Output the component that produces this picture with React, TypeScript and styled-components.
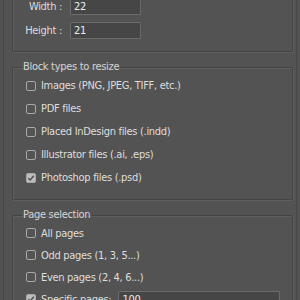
import styled, { createGlobalStyle } from "styled-components";

const Global = createGlobalStyle`
  html, body {
    margin: 0;
    padding: 0;
    background: #535353;
    overflow: hidden;
  }
  body {
    font-family: "DejaVu Sans Condensed", "Liberation Sans", sans-serif;
    font-size: 11px;
    letter-spacing: -0.3px;
    color: #dedede;
  }
`;

const Panel = styled.div`
  margin: 0 3px;
  height: 300px;
  border-left: 1px solid #474747;
  border-right: 1px solid #474747;
  box-sizing: border-box;
  overflow: hidden;
`;

const Scroller = styled.div`
  margin-top: -31px;
`;

const Group = styled.fieldset<{ $pad?: string }>`
  margin: 0 3px 0 8px;
  padding: ${({ $pad }) => $pad || "0 10px 10px 13px"};
  border: 1px solid #444444;
  box-shadow: 1px 1px 0 #5e5e5e, inset 1px 1px 0 #5e5e5e;
  border-radius: 1px;

  & + & {
    margin-top: 8px;
  }
`;

const Legend = styled.legend`
  padding: 0 1px;
  margin-left: -4px;
  color: #d4d4d4;
  line-height: 14px;
`;

const FieldRow = styled.div`
  display: flex;
  align-items: center;
  height: 24px;
`;

const FieldLabel = styled.div`
  width: 41px;
  text-align: right;
  margin-right: 8px;
  color: #dcdcdc;
  white-space: nowrap;
`;

const TextBox = styled.div<{ $w: number }>`
  width: ${({ $w }) => $w}px;
  height: 17px;
  box-sizing: border-box;
  background: #464646;
  border: 1px solid #6b6b6b;
  border-radius: 1px;
  padding: 0 3px;
  display: flex;
  align-items: center;
  color: #ececec;
`;

const CheckRow = styled.div<{ $h: number }>`
  display: flex;
  align-items: center;
  height: ${({ $h }) => $h}px;
`;

const Box = styled.span<{ $on?: boolean }>`
  width: 10px;
  height: 10px;
  box-sizing: border-box;
  border: 1px solid #a9a9a9;
  border-radius: 2px;
  background: ${({ $on }) => ($on ? "#bcbcbc" : "transparent")};
  margin-right: 5px;
  display: flex;
  align-items: center;
  justify-content: center;
  flex: none;
`;

const CheckLabel = styled.span`
  color: #dedede;
  white-space: nowrap;
`;

function Check({ label, on, h, children }: { label: string; on?: boolean; h: number; children?: React.ReactNode }) {
  return (
    <CheckRow $h={h}>
      <Box $on={on}>
        {on && (
          <svg width="8" height="8" viewBox="0 0 8 8">
            <path d="M1.3 4.2 L3.2 6 L6.8 1.8" fill="none" stroke="#4f4f4f" strokeWidth="1.4" />
          </svg>
        )}
      </Box>
      <CheckLabel>{label}</CheckLabel>
      {children}
    </CheckRow>
  );
}

const PagesBox = styled(TextBox)`
  margin-left: 7px;
`;

export default function App() {
  return (
    <>
      <Global />
      <Panel>
        <Scroller>
          <Group $pad="0 10px 9px 8px">
            <FieldRow>
              <FieldLabel>Left :</FieldLabel>
              <TextBox $w={71}>0</TextBox>
            </FieldRow>
            <FieldRow>
              <FieldLabel>Width :</FieldLabel>
              <TextBox $w={71}>22</TextBox>
            </FieldRow>
            <FieldRow>
              <FieldLabel>Height :</FieldLabel>
              <TextBox $w={71}>21</TextBox>
            </FieldRow>
          </Group>
          <Group>
            <Legend>Block types to resize</Legend>
            <Check h={23} label="Images (PNG, JPEG, TIFF, etc.)" />
            <Check h={23} label="PDF files" />
            <Check h={23} label="Placed InDesign files (.indd)" />
            <Check h={23} label="Illustrator files (.ai, .eps)" />
            <Check h={23} on label="Photoshop files (.psd)" />
          </Group>
          <Group>
            <Legend>Page selection</Legend>
            <Check h={22} label="All pages" />
            <Check h={22} label="Odd pages (1, 3, 5...)" />
            <Check h={22} label="Even pages (2, 4, 6...)" />
            <Check h={22} on label="Specific pages:">
              <PagesBox $w={162}>100</PagesBox>
            </Check>
          </Group>
        </Scroller>
      </Panel>
    </>
  );
}
